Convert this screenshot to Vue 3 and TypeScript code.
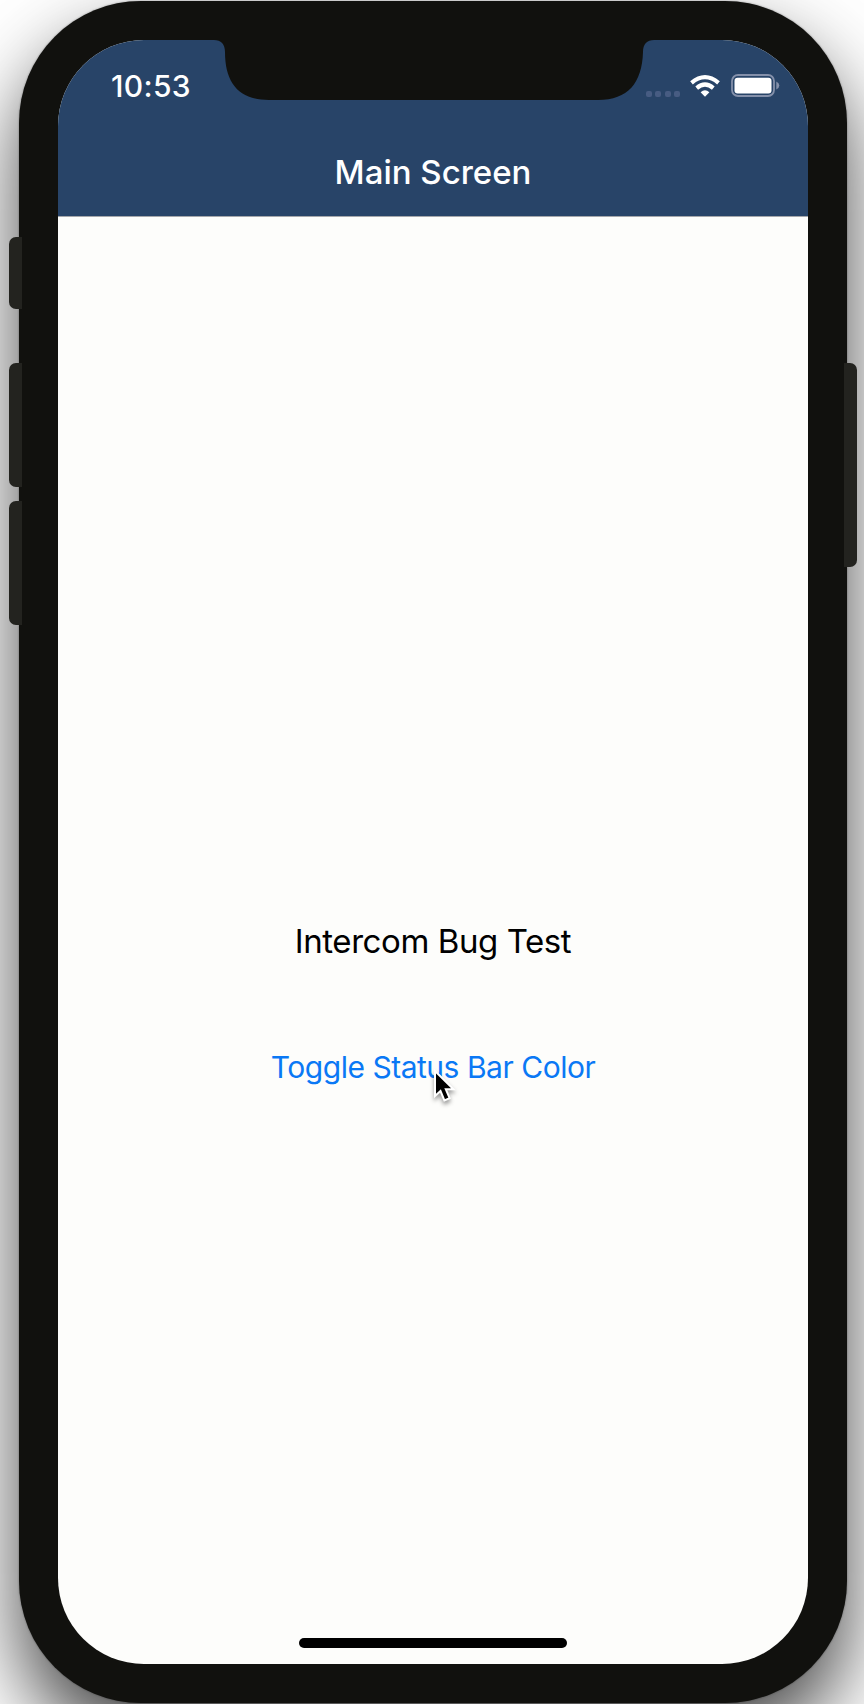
<script setup lang="ts">
const title = 'Main Screen'
const time = '10:53'
const signalDots = [0, 1, 2, 3]
const hardwareKeys = ['mute', 'volume-up', 'volume-down', 'power']
</script>

<template>
  <div class="stage">
    <span v-for="key in hardwareKeys" :key="key" class="key" :class="key"></span>
    <div class="phone">
      <div class="screen">
        <header class="header">
          <div class="status">
            <span class="time">{{ time }}</span>
            <div class="indicators">
              <div class="signal"><i v-for="dot in signalDots" :key="dot"></i></div>
              <svg class="wifi" width="30" height="22" viewBox="0 0 30 22">
                <g fill="none" stroke="#fff" stroke-width="4.2">
                  <path d="M1.5 7.8 Q15 -3.4 28.5 7.8" />
                  <path d="M6.7 13.1 Q15 6 23.3 13.1" />
                </g>
                <path d="M15 21.7 L10.6 17.3 Q15 13.4 19.4 17.3 Z" fill="#fff" />
              </svg>
              <svg class="battery" width="49" height="23" viewBox="0 0 49 23">
                <rect x="1" y="1" width="42" height="21" rx="6" fill="none" stroke="#8490aa" stroke-width="1.8" />
                <rect x="3.5" y="3.8" width="37" height="15.6" rx="3.2" fill="#fff" />
                <path d="M45.3 7.6 Q48.3 9 48.3 11.5 Q48.3 14 45.3 15.4 Z" fill="#8490aa" />
              </svg>
            </div>
          </div>
          <h1 class="title">{{ title }}</h1>
        </header>
        <main class="content">
          <p class="label">Intercom Bug Test</p>
          <button class="toggle" type="button">Toggle Status Bar Color</button>
        </main>
        <div class="home"></div>
        <svg class="notch" width="440" height="61" viewBox="0 0 440 61">
          <path d="M0 0 V1 C7 1 11 5 11 13 C11 44 25 61 55 61 H384 C414 61 428 44 429 13 C429 5 433 1 440 1 V0 Z" fill="#11110e" />
        </svg>
      </div>
    </div>
    <svg class="pointer" width="28" height="38" viewBox="0 0 28 38">
      <path d="M4 2 V27 L9.5 22 L13.4 31.4 L18.6 29.2 L14.8 20.2 H22.5 Z" fill="#000" stroke="#fff" stroke-width="2" />
    </svg>
  </div>
</template>

<style>
body {
  background: #fff;
}
</style>

<style scoped>
.stage {
  position: relative;
  box-sizing: border-box;
  width: 864px;
  height: 1704px;
  padding: 1px 0 0 19px;
  overflow: hidden;
  font-family: Inter, "Liberation Sans", sans-serif;
}
.phone {
  position: relative;
  box-sizing: border-box;
  width: 828px;
  height: 1702px;
  padding: 39px;
  border-radius: 122px;
  background: #11110e;
  box-shadow: 0 0 2px rgba(0, 0, 0, 0.4), 0 40px 80px rgba(0, 0, 0, 0.72);
}
.screen {
  position: relative;
  display: flex;
  flex-direction: column;
  width: 750px;
  height: 1624px;
  border-radius: 86px;
  overflow: hidden;
  background: #fdfdfb;
}
.header {
  box-sizing: border-box;
  height: 177px;
  border-bottom: 1px solid #a5a7ab;
  background: #284468;
  color: #fff;
}
.status {
  box-sizing: border-box;
  display: flex;
  justify-content: space-between;
  align-items: center;
  height: 88px;
  padding: 4px 28px 0 53px;
}
.time {
  font-size: 30px;
  font-weight: 500;
  letter-spacing: 0.35px;
}
.indicators {
  display: flex;
  align-items: center;
}
.signal {
  display: flex;
  gap: 3.4px;
  margin: 15px 10px 0 0;
}
.signal i {
  width: 6px;
  height: 6px;
  border-radius: 2px;
  background: #475c82;
}
.wifi {
  margin-top: -1px;
}
.battery {
  margin: -1px 0 0 11px;
}
.title {
  margin: 0;
  text-align: center;
  font-size: 33px;
  line-height: 88px;
  font-weight: 500;
}
.content {
  flex: 1;
  display: flex;
  flex-direction: column;
  align-items: center;
  padding-top: 699px;
}
.label {
  margin: 0;
  font-size: 33px;
  line-height: 50px;
  letter-spacing: -0.42px;
  color: #000;
}
.toggle {
  margin-top: 76px;
  padding: 0;
  border: 0;
  background: none;
  font: inherit;
  font-size: 30px;
  line-height: 50px;
  letter-spacing: -0.48px;
  color: #0a78f5;
}
.home {
  align-self: center;
  width: 268px;
  height: 10px;
  margin-bottom: 16px;
  border-radius: 5px;
  background: #000;
}
.notch {
  position: absolute;
  top: -1px;
  left: 156px;
}
.key {
  position: absolute;
  left: 9px;
  width: 20px;
  border-radius: 7px;
  background: #23231f;
  z-index: 1;
  clip-path: inset(0 7px 0 0);
}
.mute {
  top: 237px;
  height: 72px;
}
.volume-up {
  top: 363px;
  height: 124px;
}
.volume-down {
  top: 501px;
  height: 124px;
}
.power {
  left: 837px;
  top: 363px;
  height: 204px;
  clip-path: inset(0 0 0 7px);
}
.pointer {
  position: absolute;
  z-index: 2;
  left: 431px;
  top: 1069px;
  filter: drop-shadow(0 3px 2px rgba(0, 0, 0, 0.4));
}
</style>
